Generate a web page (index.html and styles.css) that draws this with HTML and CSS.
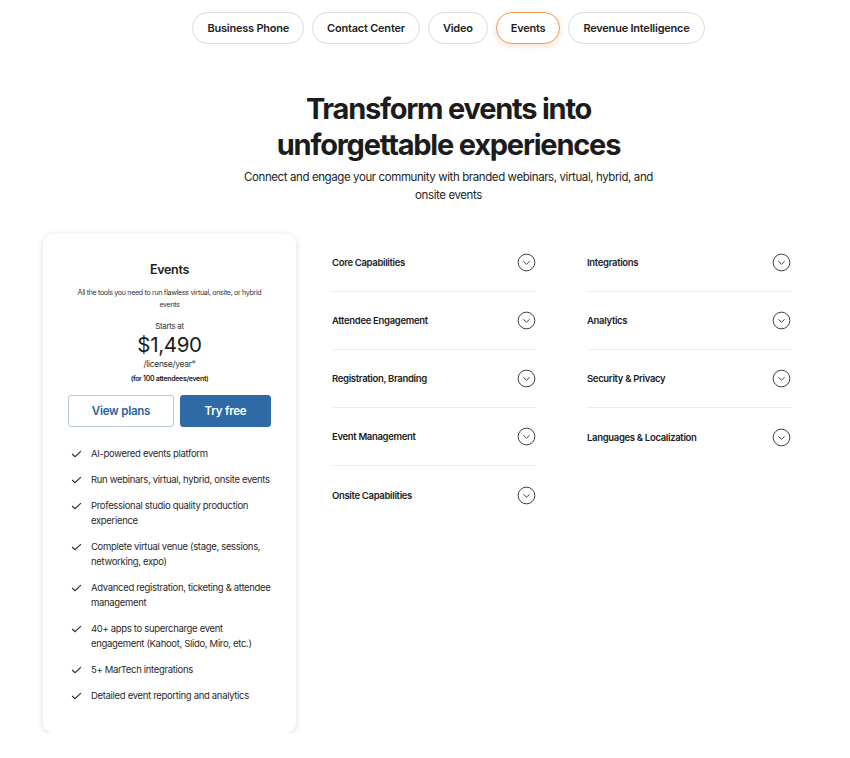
FILE: index.html
```html
<!DOCTYPE html>
<html lang="en">
<head>
<meta charset="utf-8">
<title>Events pricing</title>
<link rel="stylesheet" href="styles.css">
</head>
<body>
<div class="top">
  <nav class="tabs">
    <button class="tab">Business Phone</button>
    <button class="tab">Contact Center</button>
    <button class="tab">Video</button>
    <button class="tab tab-active">Events</button>
    <button class="tab">Revenue Intelligence</button>
  </nav>

  <header class="hero">
    <h1 class="hero-title">Transform events into<br>unforgettable experiences</h1>
    <p class="hero-sub">Connect and engage your community with branded webinars, virtual, hybrid, and onsite events</p>
  </header>
</div>

<main class="content">
  <section class="card">
    <h2 class="card-title">Events</h2>
    <p class="card-desc">All the tools you need to run flawless virtual, onsite, or hybrid events</p>
    <p class="starts">Starts at</p>
    <p class="price">$1,490</p>
    <p class="per">/license/year<span class="star">*</span></p>
    <p class="note">(for 100 attendees/event)</p>
    <div class="btns">
      <button class="btn btn-outline">View plans</button>
      <button class="btn btn-solid">Try free</button>
    </div>
    <ul class="checks">
      <li><svg class="chk" viewBox="0 0 12 9"><path d="M1 4.5 L4.3 7.6 L11 1.2" /></svg><span>AI-powered events platform</span></li>
      <li><svg class="chk" viewBox="0 0 12 9"><path d="M1 4.5 L4.3 7.6 L11 1.2" /></svg><span>Run webinars, virtual, hybrid, onsite events</span></li>
      <li><svg class="chk" viewBox="0 0 12 9"><path d="M1 4.5 L4.3 7.6 L11 1.2" /></svg><span>Professional studio quality production experience</span></li>
      <li><svg class="chk" viewBox="0 0 12 9"><path d="M1 4.5 L4.3 7.6 L11 1.2" /></svg><span>Complete virtual venue (stage, sessions, networking, expo)</span></li>
      <li><svg class="chk" viewBox="0 0 12 9"><path d="M1 4.5 L4.3 7.6 L11 1.2" /></svg><span>Advanced registration, ticketing &amp; attendee management</span></li>
      <li><svg class="chk" viewBox="0 0 12 9"><path d="M1 4.5 L4.3 7.6 L11 1.2" /></svg><span>40+ apps to supercharge event engagement (Kahoot, Slido, Miro, etc.)</span></li>
      <li><svg class="chk" viewBox="0 0 12 9"><path d="M1 4.5 L4.3 7.6 L11 1.2" /></svg><span>5+ MarTech integrations</span></li>
      <li><svg class="chk" viewBox="0 0 12 9"><path d="M1 4.5 L4.3 7.6 L11 1.2" /></svg><span>Detailed event reporting and analytics</span></li>
    </ul>
  </section>

  <section class="acc-grid">
    <div class="acc-col">
      <div class="acc-row"><span>Core Capabilities</span><svg class="chev" viewBox="0 0 20 20"><circle cx="10" cy="10" r="8.8"/><path d="M6.7 8.7 L10 11.8 L13.3 8.7"/></svg></div>
      <div class="acc-row"><span>Attendee Engagement</span><svg class="chev" viewBox="0 0 20 20"><circle cx="10" cy="10" r="8.8"/><path d="M6.7 8.7 L10 11.8 L13.3 8.7"/></svg></div>
      <div class="acc-row"><span>Registration, Branding</span><svg class="chev" viewBox="0 0 20 20"><circle cx="10" cy="10" r="8.8"/><path d="M6.7 8.7 L10 11.8 L13.3 8.7"/></svg></div>
      <div class="acc-row"><span>Event Management</span><svg class="chev" viewBox="0 0 20 20"><circle cx="10" cy="10" r="8.8"/><path d="M6.7 8.7 L10 11.8 L13.3 8.7"/></svg></div>
      <div class="acc-row"><span>Onsite Capabilities</span><svg class="chev" viewBox="0 0 20 20"><circle cx="10" cy="10" r="8.8"/><path d="M6.7 8.7 L10 11.8 L13.3 8.7"/></svg></div>
    </div>
    <div class="acc-col">
      <div class="acc-row"><span>Integrations</span><svg class="chev" viewBox="0 0 20 20"><circle cx="10" cy="10" r="8.8"/><path d="M6.7 8.7 L10 11.8 L13.3 8.7"/></svg></div>
      <div class="acc-row"><span>Analytics</span><svg class="chev" viewBox="0 0 20 20"><circle cx="10" cy="10" r="8.8"/><path d="M6.7 8.7 L10 11.8 L13.3 8.7"/></svg></div>
      <div class="acc-row"><span>Security &amp; Privacy</span><svg class="chev" viewBox="0 0 20 20"><circle cx="10" cy="10" r="8.8"/><path d="M6.7 8.7 L10 11.8 L13.3 8.7"/></svg></div>
      <div class="acc-row"><span>Languages &amp; Localization</span><svg class="chev" viewBox="0 0 20 20"><circle cx="10" cy="10" r="8.8"/><path d="M6.7 8.7 L10 11.8 L13.3 8.7"/></svg></div>
    </div>
  </section>
</main>
</body>
</html>
```

FILE: styles.css
```css
* { box-sizing: border-box; }
html, body { margin: 0; padding: 0; background: #fff; }
body {
  font-family: Inter, "Noto Sans", "Liberation Sans", sans-serif;
  color: #1c1c1c;
  letter-spacing: -0.02em;
}
p, h1, h2, ul { margin: 0; padding: 0; }

.top { padding-left: 47px; }

.tabs {
  display: flex;
  justify-content: center;
  gap: 8px;
  padding-top: 12px;
}
.tab {
  height: 32px;
  padding: 0 14px;
  border: 1.5px solid #dcdcdc;
  border-radius: 16px;
  background: #fff;
  font-family: inherit;
  font-size: 11px;
  font-weight: 600;
  letter-spacing: -0.02em;
  color: #1e1e1e;
}
.tab-active {
  border-color: #ee9a5a;
  box-shadow: 0 2px 6px rgba(238, 140, 70, 0.28);
}

.hero { text-align: center; margin-top: 47px; }
.hero-title {
  font-size: 29px;
  line-height: 36px;
  font-weight: 700;
  letter-spacing: -0.042em;
  color: #1c1c1c;
}
.hero-sub {
  margin: 5px auto 0;
  max-width: 420px;
  font-size: 11.5px;
  line-height: 18px;
  letter-spacing: -0.035em;
  color: #242424;
}

.content {
  display: flex;
  align-items: flex-start;
  padding-left: 43px;
  margin-top: 30px;
}

.card {
  width: 253px;
  flex: none;
  padding: 28px 25px 30px;
  border-radius: 10px;
  box-shadow: 0 1px 6px rgba(0, 0, 0, 0.14);
  text-align: center;
}
.card-title { font-size: 12.5px; line-height: 16px; font-weight: 600; }
.card-desc {
  margin: 9px auto 0;
  font-size: 7.1px;
  line-height: 12px;
  color: #333;
  padding: 0 4px;
}
.starts { margin-top: 9px; font-size: 8px; line-height: 12px; color: #333; }
.price { margin-top: 1px; font-size: 20.5px; line-height: 24px; font-weight: 400; color: #1c1c1c; }
.per { margin-top: 1px; font-size: 8.5px; line-height: 12px; color: #333; }
.star { color: #2e6aa8; }
.note { margin-top: 4px; font-size: 7px; line-height: 10px; font-weight: 600; color: #222; }

.btns { display: flex; gap: 6px; margin-top: 11px; }
.btn {
  height: 32px;
  border-radius: 3px;
  font-family: inherit;
  font-size: 11.5px;
  font-weight: 600;
  letter-spacing: -0.02em;
}
.btn-outline {
  width: 106px;
  background: #fff;
  color: #2c63a0;
  border: 1px solid #b9c9dc;
}
.btn-solid {
  flex: 1;
  background: #2f6aa7;
  color: #fff;
  border: 1px solid #2f6aa7;
}

.checks {
  list-style: none;
  margin-top: 19px;
  padding-left: 3px;
  display: flex;
  flex-direction: column;
  gap: 11px;
  text-align: left;
}
.checks li {
  display: flex;
  gap: 9px;
  font-size: 9.5px;
  line-height: 15px;
  color: #2a2a2a;
}
.chk {
  width: 11px;
  height: 8px;
  flex: none;
  margin-top: 4px;
  fill: none;
  stroke: #2a2a2a;
  stroke-width: 1.2;
}

.acc-grid {
  display: grid;
  grid-template-columns: 204px 204px;
  column-gap: 51px;
  margin-left: 36px;
}
.acc-row {
  height: 58px;
  display: flex;
  align-items: center;
  justify-content: space-between;
  border-bottom: 1px solid #ececec;
  font-size: 9.5px;
  font-weight: 600;
  color: #1c1c1c;
}
.acc-row:last-child { border-bottom: none; }
.chev {
  width: 19px;
  height: 19px;
  fill: none;
  stroke: #333;
  stroke-width: 1;
}
```
